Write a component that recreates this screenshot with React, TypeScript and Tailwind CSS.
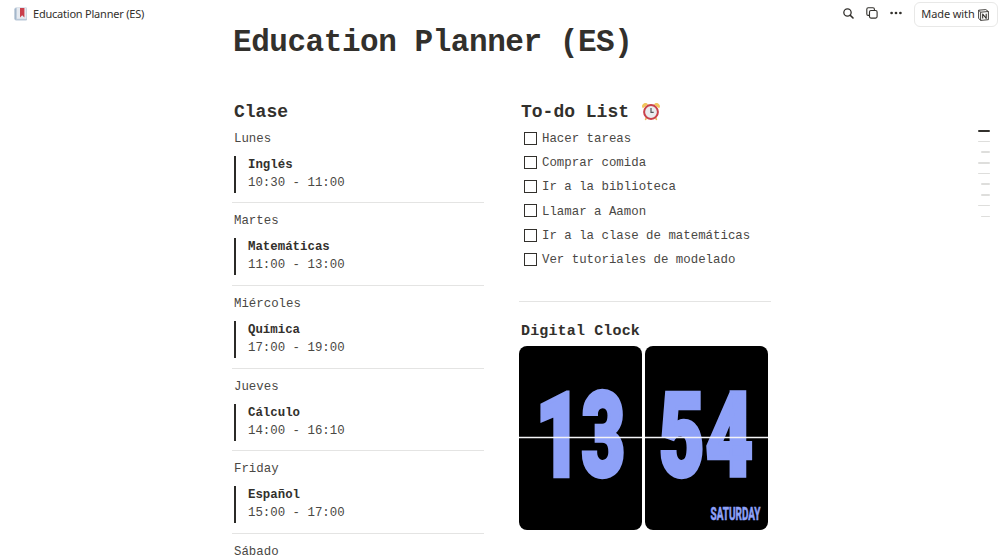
const classes = [
  { day: 'Lunes', name: 'Inglés', time: '10:30 - 11:00' },
  { day: 'Martes', name: 'Matemáticas', time: '11:00 - 13:00' },
  { day: 'Miércoles', name: 'Química', time: '17:00 - 19:00' },
  { day: 'Jueves', name: 'Cálculo', time: '14:00 - 16:10' },
  { day: 'Friday', name: 'Español', time: '15:00 - 17:00' },
]

const todos = [
  'Hacer tareas',
  'Comprar comida',
  'Ir a la biblioteca',
  'Llamar a Aamon',
  'Ir a la clase de matemáticas',
  'Ver tutoriales de modelado',
]

// true = long mark, false = indented one
const outline = [true, false, true, true, false, false, true, false]

const BookIcon = () => (
  <svg width="14" height="14" viewBox="0 0 14 14" className="shrink-0">
    <rect x="1" y="0.5" width="12" height="13" rx="1" fill="#b9c8d8" />
    <rect x="2.8" y="0.8" width="9.6" height="11" fill="#e6eaf0" />
    <path d="M1 1.5v11" stroke="#8fa5bd" strokeWidth="1" />
    <path d="M6 1h4.4v9.4L8.2 8.3 6 10.4z" fill="#ca3f4b" />
  </svg>
)

const AlarmIcon = () => (
  <svg width="18" height="18" viewBox="0 0 18 18" className="-mt-px">
    <path d="M0.8 5.2A3.2 3.2 0 0 1 6 1.4zM17.2 5.2A3.2 3.2 0 0 0 12 1.4z" fill="#f2c55c" />
    <path d="M4.5 14.5 3.6 16.4M13.5 14.5l0.9 1.9" stroke="#e9b95a" strokeWidth="1.6" strokeLinecap="round" />
    <circle cx="9" cy="9" r="6.9" fill="#e9ecee" stroke="#c9414a" strokeWidth="2" />
    <path d="M9 5v4.3h2.7" fill="none" stroke="#55565a" strokeWidth="1.2" />
  </svg>
)

const SearchIcon = () => (
  <svg width="11" height="11" viewBox="0 0 12 12" fill="none" stroke="#32302c" strokeWidth="1.4" strokeLinecap="round">
    <circle cx="4.9" cy="4.9" r="4" />
    <path d="m7.9 7.9 3 3" strokeWidth="1.8" />
  </svg>
)

const CopyIcon = () => (
  <svg width="12" height="12" viewBox="0 0 12 12" fill="none" stroke="#32302c" strokeWidth="1.1">
    <rect x="3.5" y="3.5" width="7.6" height="7.6" rx="1.5" />
    <path d="M3.5 8.4H2.2A1.4 1.4 0 0 1 .8 7V2.2A1.4 1.4 0 0 1 2.2.8H7a1.4 1.4 0 0 1 1.4 1.4v1.3" />
  </svg>
)

const DotsIcon = () => (
  <svg width="12" height="4" viewBox="0 0 12 4" fill="#32302c">
    <circle cx="1.6" cy="2" r="1.35" />
    <circle cx="6" cy="2" r="1.35" />
    <circle cx="10.4" cy="2" r="1.35" />
  </svg>
)

const NotionIcon = () => (
  <svg width="11" height="12" viewBox="0 0 11 12" fill="none" stroke="#32302c" strokeWidth="0.9" strokeLinejoin="round">
    <path d="M.6 1.2 7.8.6l2.6 1.9v8.2l-7.8.7L.6 9.2zM.6 1.2l2 2 7.8-.7M2.6 3.2v8.2" />
    <path d="M4.7 9.6V5l3.5 4.3V4.7" strokeWidth="1.1" />
  </svg>
)

const TopBar = () => (
  <header className="flex h-[27px] items-start justify-between bg-white pl-[14px] pr-[7px] font-['Noto_Sans','Liberation_Sans',sans-serif] text-[11px] text-[#32302c]">
    <div className="flex h-7 items-center gap-[5px]">
      <BookIcon />
      <span className="whitespace-nowrap tracking-[-0.22px]">Education Planner (ES)</span>
    </div>
    <div className="flex items-start">
      <div className="mr-3 flex h-[26px] items-center gap-3">
        <SearchIcon />
        <CopyIcon />
        <DotsIcon />
      </div>
      <button className="mt-0.5 flex h-[25px] w-[84px] items-center justify-center gap-[3px] rounded-md border border-[#e8e8e7] bg-white pr-0.5">
        <span className="whitespace-nowrap tracking-[-0.1px]">Made with</span>
        <NotionIcon />
      </button>
    </div>
  </header>
)

const Schedule = () => (
  <section className="w-[252px] text-[12.4px]">
    <h2 className="pl-0.5 text-[18px] font-bold leading-6">Clase</h2>
    {classes.map((item, i) => (
      <div key={item.day} className={`border-b border-[#e4e4e3] ${i === 0 ? 'h-[79px] pt-1.5' : 'h-[82.75px] pt-[9px]'}`}>
        <p className="pl-0.5 leading-[18px] text-[#4a4844]">{item.day}</p>
        <div className="ml-0.5 mt-2 h-[37px] border-l-2 border-[#2b2a27] pl-3 leading-[18px]">
          <p className="font-bold">{item.name}</p>
          <p className="text-[#4a4844]">{item.time}</p>
        </div>
      </div>
    ))}
    <p className="pl-0.5 pt-[9px] leading-[18px] text-[#4a4844]">Sábado</p>
  </section>
)

const TodoList = () => (
  <section>
    <h2 className="flex items-center gap-[13px] pl-0.5 text-[18px] font-bold leading-6">
      To-do List <AlarmIcon />
    </h2>
    <ul className="mt-[3px] text-[12.4px] text-[#4a4844]">
      {todos.map((todo) => (
        <li key={todo} className="flex h-[24.25px] items-center gap-[5.5px] pl-[4.5px]">
          <span className="mb-0.5 size-[13px] border-[1.5px] border-[#32302c]" />
          {todo}
        </li>
      ))}
    </ul>
  </section>
)

interface Digit {
  value: string
  x: number
  scale: number
}

const ClockPanel = ({ digits, label }: { digits: Digit[]; label?: string }) => (
  <svg
    width="123"
    height="184"
    viewBox="0 0 123 184"
    className="rounded-lg bg-black font-['Roboto','Liberation_Sans',sans-serif] font-black"
    fill="#8ea1f8">
    {digits.map((digit) => (
      <text
        key={digit.value}
        transform={`translate(${digit.x} 129.5) scale(${digit.scale} 1)`}
        fontSize="117"
        stroke="#8ea1f8"
        strokeWidth="4.5">
        {digit.value}
      </text>
    ))}
    {label && (
      <text
        x="65.5"
        y="174"
        fontSize="17.5"
        fontWeight="700"
        textLength="50"
        lengthAdjust="spacingAndGlyphs"
        stroke="#8ea1f8"
        strokeWidth="0.6">
        {label}
      </text>
    )}
    <path d="M0 91.5h123" stroke="#f4f4f6" strokeWidth="1.4" />
  </svg>
)

const DigitalClock = () => (
  <section className="mt-[17px]">
    <h3 className="pl-0.5 pt-px text-[15px] font-bold leading-6 tracking-[0.15px]">Digital Clock</h3>
    <div className="mt-[2px] flex gap-[3px]">
      <ClockPanel
        digits={[
          { value: '1', x: 16.5, scale: 0.68 },
          { value: '3', x: 62.5, scale: 0.645 },
        ]}
      />
      <ClockPanel
        digits={[
          { value: '5', x: 14, scale: 0.67 },
          { value: '4', x: 60.5, scale: 0.7 },
        ]}
        label="SATURDAY"
      />
    </div>
  </section>
)

const App = () => {
  return (
    <div className="flex h-[555px] w-[1005px] flex-col overflow-hidden bg-white">
      <TopBar />
      <div className="flex justify-between pl-[232px] pr-[15px]">
        <main className="w-[539px] font-['Liberation_Mono',monospace] text-[#32302c]">
          <h1 className="whitespace-nowrap pl-px text-[31px] font-bold leading-8 tracking-[-0.45px]">Education Planner (ES)</h1>
          <div className="mt-[41px] flex justify-between">
            <Schedule />
            <div className="w-[252px]">
              <TodoList />
              <hr className="mt-7 border-[#e4e4e3]" />
              <DigitalClock />
            </div>
          </div>
        </main>
        <nav className="mt-[103px] flex flex-col items-end gap-[9.2px]">
          <span className="h-[1.5px] w-3 rounded-sm bg-[#32302c]" />
          {outline.map((long, i) => (
            <span key={i} className={`h-[1.5px] rounded-sm bg-[#dededc] ${long ? 'w-3' : 'w-[9px]'}`} />
          ))}
        </nav>
      </div>
    </div>
  )
}

export default App
